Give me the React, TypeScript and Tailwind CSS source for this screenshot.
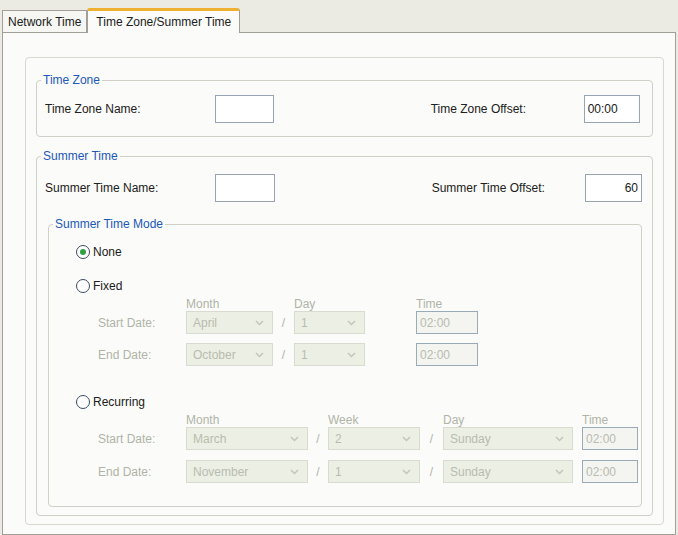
import React from "react";

const Chev = () => (
  <svg width="9" height="6" viewBox="0 0 9 6"><path d="M1 1l3.5 3.5L8 1" stroke="#c0c8b8" strokeWidth="1.5" fill="none" /></svg>
);

const Sel = ({ w, v }: { w: string; v: string }) => (
  <div className={`${w} h-[23px] border border-[#d8dcd0] bg-[#ecefe4] flex items-center justify-between pl-[6px] pr-[8px] text-[#b8bcb0]`}>
    <span>{v}</span>
    <Chev />
  </div>
);

const TimeBox = ({ w }: { w: string }) => (
  <div className={`${w} h-[23px] border border-[#9aaab6] bg-[#f4f4f0] flex items-center pl-[3px] text-[#b8bcb0]`}>02:00</div>
);

const Radio = ({ on }: { on?: boolean }) => (
  <div className="w-[14px] h-[14px] rounded-full border border-[#3a4a60] bg-white flex items-center justify-center">
    {on && <div className="w-[6px] h-[6px] rounded-full bg-[#30a040]" />}
  </div>
);

const Group = ({ title, className, children }: { title: string; className: string; children: React.ReactNode }) => (
  <div className={`relative border border-[#d0d0c8] rounded-[4px] ${className}`}>
    <div className="absolute -top-[9px] left-[4px] bg-[#fbfbf9] px-[2px] text-[#2058b8] leading-[16px]">{title}</div>
    {children}
  </div>
);

export default function App() {
  return (
    <div className="w-[678px] h-[535px] bg-[#ecebe3] text-[12px] text-[#202020] overflow-hidden" style={{ fontFamily: '"Liberation Sans", Arial, sans-serif' }}>
      <div className="flex items-end h-[32px] pl-[2px] pt-[8px]">
        <div className="h-[22px] px-[5px] border border-[#a0a098] border-b-0 bg-[#f6f6f2] flex items-center">Network Time</div>
        <div className="h-[25px] px-[8px] border border-[#a0a098] border-t-[3px] border-t-[#f0b030] border-b-0 bg-[#fbfbf9] flex items-center rounded-t-[3px] -mb-px relative">Time Zone/Summer Time</div>
      </div>
      <div className="mx-[2px] h-[503px] border border-[#a0a098] bg-[#fbfbf9] pt-[24px] pl-[22px] pr-[11px]">
        <div className="h-[468px] border border-[#d8d8d0] rounded-[4px] pt-[22px] px-[10px]">
          <Group title="Time Zone" className="h-[57px] pl-[8px] pr-[12px] flex items-center">
            <span className="w-[175px]">Time Zone Name:</span>
            <div className="w-[61px] h-[28px] border border-[#98a4b4] bg-white" />
            <span className="ml-[157px] w-[158px]">Time Zone Offset:</span>
            <div className="w-[58px] h-[28px] border border-[#98a4b4] bg-white flex items-center pl-[3px]">00:00</div>
          </Group>
          <Group title="Summer Time" className="mt-[19px] h-[360px] pl-[8px] pr-[10px] pt-[17px]">
            <div className="flex items-center">
              <span className="w-[175px]">Summer Time Name:</span>
              <div className="w-[61px] h-[28px] border border-[#98a4b4] bg-white" />
              <span className="ml-[157px] w-[158px]">Summer Time Offset:</span>
              <div className="w-[58px] h-[28px] border border-[#98a4b4] bg-white flex items-center justify-end pr-[3px]">60</div>
            </div>
            <Group title="Summer Time Mode" className="mt-[22px] ml-[3px] h-[283px] pl-[27px] pt-[18px]">
              <div className="flex items-center gap-[3px]"><Radio on /><span>None</span></div>
              <div className="flex items-center gap-[3px] mt-[16px]"><Radio /><span>Fixed</span></div>
              <div className="ml-[22px] text-[#b0b4a8]">
                <div className="flex mt-[2px] leading-[14px]">
                  <span className="w-[88px]" /><span className="w-[108px]">Month</span><span className="w-[122px]">Day</span><span>Time</span>
                </div>
                {[["Start Date:", "April"], ["End Date:", "October"]].map(([l, m], i) => (
                  <div key={l} className={`flex items-center ${i ? "mt-[9px]" : ""}`}>
                    <span className="w-[88px]">{l}</span>
                    <Sel w="w-[87px]" v={m} />
                    <span className="w-[21px] text-center">/</span>
                    <Sel w="w-[71px]" v="1" />
                    <span className="w-[51px]" />
                    <TimeBox w="w-[62px]" />
                  </div>
                ))}
              </div>
              <div className="flex items-center gap-[3px] mt-[27px]"><Radio /><span>Recurring</span></div>
              <div className="ml-[22px] text-[#b0b4a8]">
                <div className="flex mt-[2px] leading-[14px]">
                  <span className="w-[88px]" /><span className="w-[142px]">Month</span><span className="w-[115px]">Week</span><span className="w-[139px]">Day</span><span>Time</span>
                </div>
                {[["Start Date:", "March", "2"], ["End Date:", "November", "1"]].map(([l, m, wk], i) => (
                  <div key={l} className={`flex items-center ${i ? "mt-[10px]" : ""}`}>
                    <span className="w-[88px]">{l}</span>
                    <Sel w="w-[122px]" v={m} />
                    <span className="w-[20px] text-center">/</span>
                    <Sel w="w-[92px]" v={wk} />
                    <span className="w-[23px] text-center">/</span>
                    <Sel w="w-[130px]" v="Sunday" />
                    <span className="w-[9px]" />
                    <TimeBox w="w-[56px]" />
                  </div>
                ))}
              </div>
            </Group>
          </Group>
        </div>
      </div>
    </div>
  );
}
